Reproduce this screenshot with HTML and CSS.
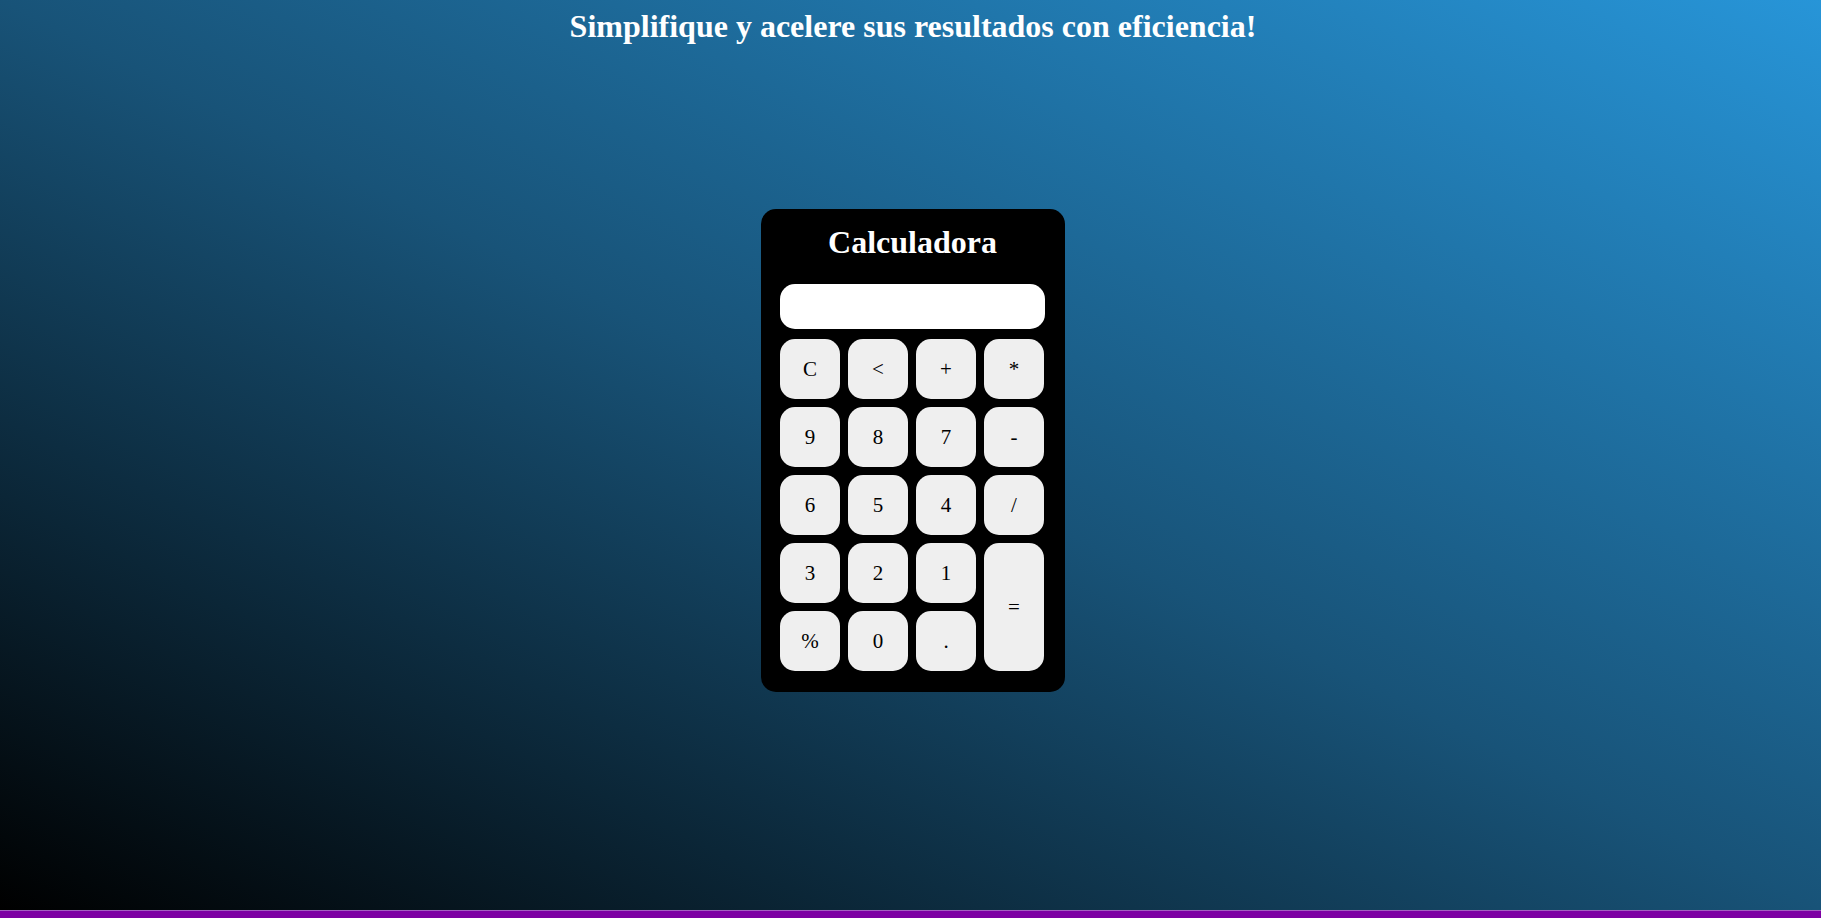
FILE: index.html
```html
<!DOCTYPE html>
<html lang="es">
<head>
<meta charset="utf-8">
<title>Calculadora</title>
<link rel="stylesheet" href="styles.css">
</head>
<body>
<div class="page">
  <h1 class="headline">Simplifique y acelere sus resultados con eficiencia!</h1>
  <div class="calculator">
    <h1 class="calc-title">Calculadora</h1>
    <input class="display" type="text">
    <div class="keys">
      <button class="key">C</button>
      <button class="key">&lt;</button>
      <button class="key">+</button>
      <button class="key">*</button>
      <button class="key">9</button>
      <button class="key">8</button>
      <button class="key">7</button>
      <button class="key">-</button>
      <button class="key">6</button>
      <button class="key">5</button>
      <button class="key">4</button>
      <button class="key">/</button>
      <button class="key">3</button>
      <button class="key">2</button>
      <button class="key">1</button>
      <button class="key key-equals">=</button>
      <button class="key">%</button>
      <button class="key">0</button>
      <button class="key">.</button>
    </div>
  </div>
</div>
<footer class="footer"></footer>
</body>
</html>
```

FILE: styles.css
```css
html, body {
  margin: 0;
  padding: 0;
}

body {
  font-family: "Liberation Serif", "Times New Roman", serif;
  background: #7d00a3;
}

.page {
  min-height: 910px;
  box-sizing: border-box;
  padding: 8px 0 0 5px;
  display: flex;
  flex-direction: column;
  align-items: center;
  background: linear-gradient(to top right, #000000 0%, #185378 50%, #2795d8 100%);
}

.headline {
  margin: 0;
  color: #ffffff;
  font-size: 32px;
  font-weight: bold;
  line-height: 36px;
  text-align: center;
}

.calculator {
  margin-top: 165px;
  width: 265px;
  padding: 15px 20px 21px 19px;
  background: #000000;
  border-radius: 15px;
  display: flex;
  flex-direction: column;
}

.calc-title {
  margin: 0 0 24px;
  color: #ffffff;
  font-size: 32px;
  font-weight: bold;
  line-height: 36px;
  text-align: center;
}

.display {
  box-sizing: border-box;
  width: 265px;
  height: 45px;
  margin: 0 0 10px;
  border: none;
  border-radius: 15px;
  background: #ffffff;
  font-family: inherit;
  font-size: 21px;
  padding: 0 12px;
  outline: none;
}

.keys {
  display: grid;
  grid-template-columns: repeat(4, 60px);
  grid-auto-rows: 60px;
  gap: 8px;
}

.key {
  border: none;
  border-radius: 15px;
  background: #efefef;
  color: #000000;
  font-family: "Liberation Serif", "Times New Roman", serif;
  font-size: 21px;
  padding: 0;
  cursor: pointer;
}

.key-equals {
  grid-column: 4;
  grid-row: 4 / span 2;
}

.footer {
  height: 40px;
  background: #7d00a3;
  border-top: 1px solid #a360c0;
}
```
